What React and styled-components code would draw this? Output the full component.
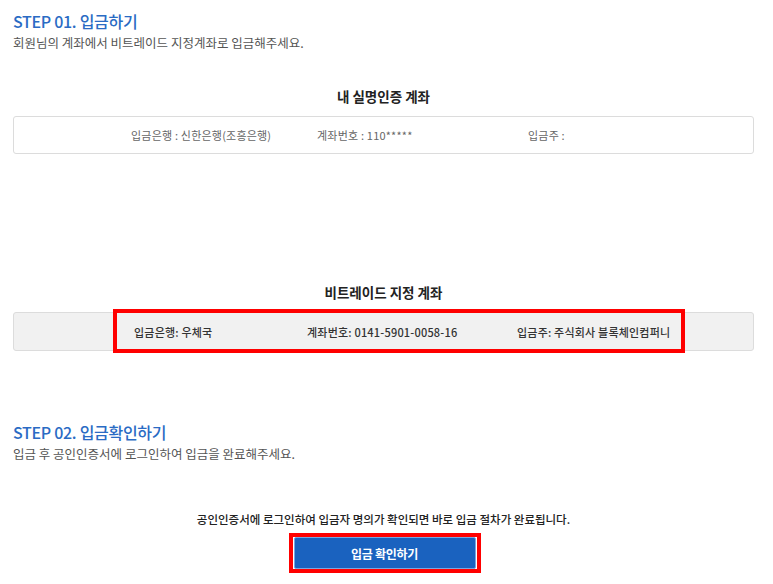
import React from "react";
import styled, { createGlobalStyle } from "styled-components";

const GlobalStyle = createGlobalStyle`
  html, body {
    margin: 0;
    padding: 0;
    background: #fff;
  }
  body {
    font-family: "Noto Sans CJK KR", "Noto Sans", sans-serif;
    color: #333;
  }
`;

const Page = styled.div`
  width: 773px;
  padding: 11px 19px 0 13px;
  box-sizing: border-box;
`;

const Section = styled.section`
  margin-top: ${(p) => p.$top || 0}px;
`;

const StepTitle = styled.h2`
  margin: 0;
  font-size: 16px;
  line-height: 20px;
  font-weight: 500;
  color: #2a6bc4;
  letter-spacing: -0.3px;
`;

const StepDesc = styled.p`
  margin: 4px 0 0;
  font-size: 12.5px;
  line-height: 16px;
  color: #555;
`;

const BoxTitle = styled.h3`
  margin: ${(p) => p.$top}px 0 11px;
  text-align: center;
  font-size: 13.5px;
  line-height: 18px;
  font-weight: 700;
  color: #222;
`;

const AccountBox = styled.div`
  position: relative;
  height: ${(p) => (p.$filled ? 39 : 38)}px;
  box-sizing: border-box;
  border: 1px solid #dcdcdc;
  border-radius: 3px;
  background: ${(p) => (p.$filled ? "#f1f1f1" : "#fff")};
  display: grid;
  grid-template-columns: ${(p) => p.$cols};
  align-items: center;
  padding-left: ${(p) => p.$indent}px;
`;

const Item = styled.span`
  font-size: 11px;
  line-height: 16px;
  white-space: nowrap;
  color: ${(p) => (p.$strong ? "#333" : "#666")};
  font-weight: ${(p) => (p.$strong ? 500 : 400)};
  letter-spacing: 0.2px;
`;

const Highlight = styled.div`
  position: absolute;
  left: 99px;
  top: -4px;
  width: 572px;
  height: 44px;
  box-sizing: border-box;
  border: 4px solid #f00;
  pointer-events: none;
`;

const Notice = styled.p`
  margin: 49px 0 6px;
  text-align: center;
  font-size: 11.5px;
  line-height: 16px;
  font-weight: 500;
  color: #222;
`;

const ButtonRow = styled.div`
  display: flex;
  justify-content: center;
  padding-left: 2px;
`;

const ButtonFrame = styled.div`
  border: 4px solid #f00;
  padding: 0 1px;
`;

const ConfirmButton = styled.button`
  display: block;
  width: 182px;
  height: 32px;
  border: 1px solid #7aa6e0;
  border-radius: 2px;
  background: #1a62bf;
  color: #fff;
  font-family: inherit;
  font-size: 12px;
  font-weight: 700;
  letter-spacing: -0.3px;
  cursor: pointer;
`;

export default function App() {
  return (
    <>
      <GlobalStyle />
      <Page>
        <Section>
          <StepTitle>STEP 01. 입금하기</StepTitle>
          <StepDesc>회원님의 계좌에서 비트레이드 지정계좌로 입금해주세요.</StepDesc>

          <BoxTitle $top={36}>내 실명인증 계좌</BoxTitle>
          <AccountBox $cols="186px 211px 1fr" $indent={117}>
            <Item>입금은행 : 신한은행(조흥은행)</Item>
            <Item>계좌번호 : 110*****</Item>
            <Item>입금주 :</Item>
          </AccountBox>

          <BoxTitle $top={129}>비트레이드 지정 계좌</BoxTitle>
          <AccountBox $filled $cols="173px 210px 1fr" $indent={120}>
            <Item $strong>입금은행: 우체국</Item>
            <Item $strong>계좌번호: 0141-5901-0058-16</Item>
            <Item $strong>입금주: 주식회사 블록체인컴퍼니</Item>
            <Highlight />
          </AccountBox>
        </Section>

        <Section $top={71}>
          <StepTitle>STEP 02. 입금확인하기</StepTitle>
          <StepDesc>입금 후 공인인증서에 로그인하여 입금을 완료해주세요.</StepDesc>

          <Notice>
            공인인증서에 로그인하여 입금자 명의가 확인되면 바로 입금 절차가 완료됩니다.
          </Notice>
          <ButtonRow>
            <ButtonFrame>
              <ConfirmButton type="button">입금 확인하기</ConfirmButton>
            </ButtonFrame>
          </ButtonRow>
        </Section>
      </Page>
    </>
  );
}
